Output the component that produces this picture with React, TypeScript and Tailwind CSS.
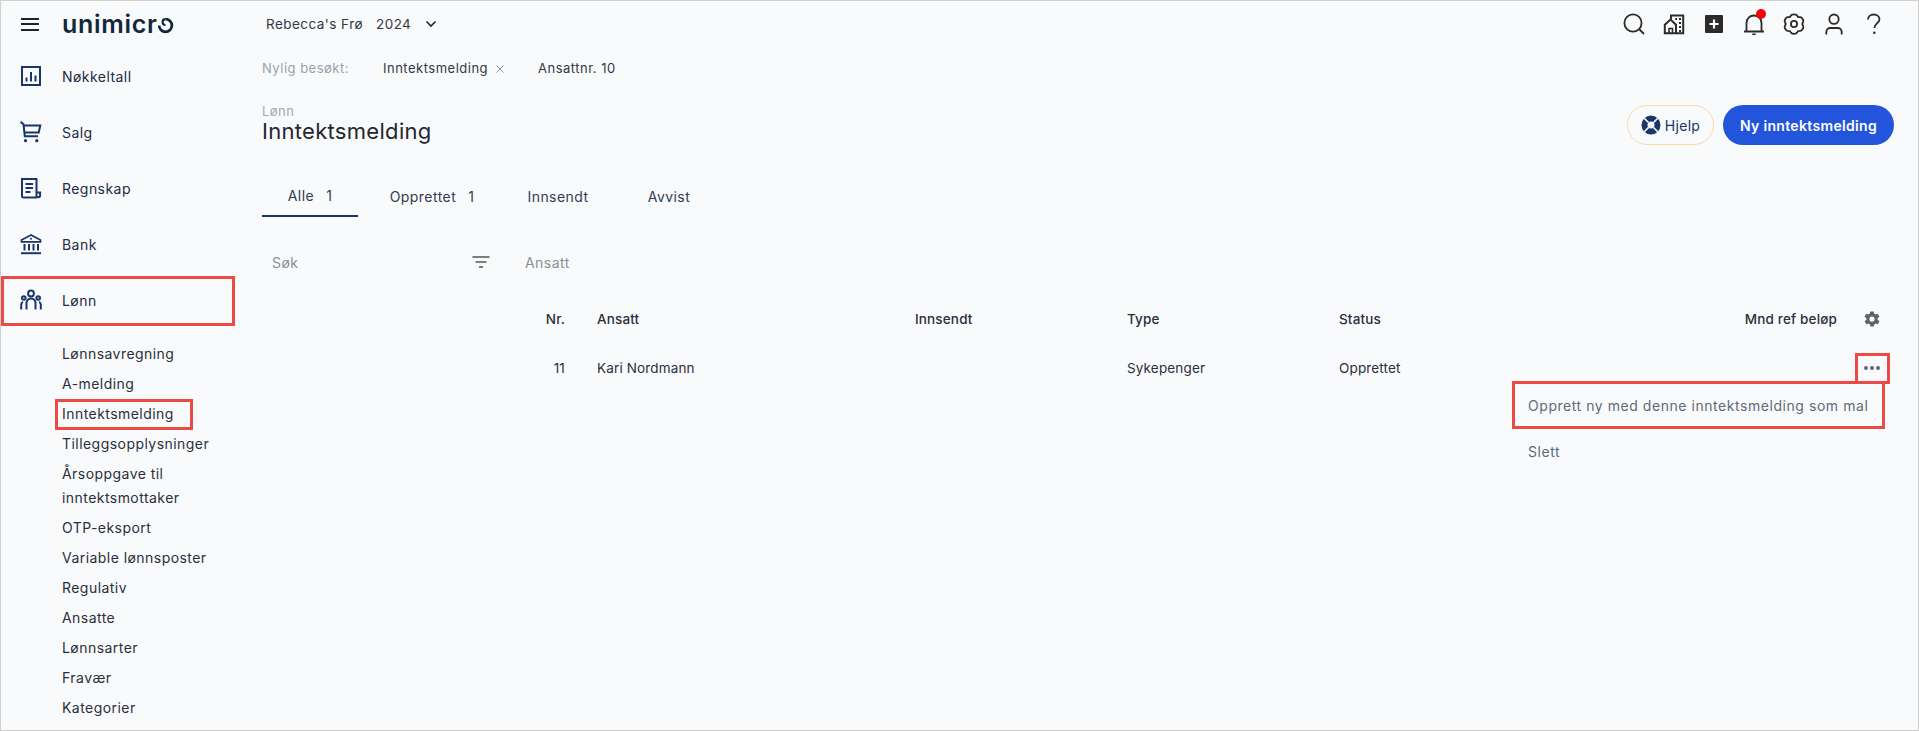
import React from "react";

const navy = "#1a3668";

function Frame({ className }: { className: string }) {
  return <span className={`absolute pointer-events-none border-[3px] border-[#ec4a45] ${className}`} />;
}

function NavIcon({ name }: { name: string }) {
  const p = { width: 22, height: 22, viewBox: "0 0 22 22", fill: "none", stroke: navy, strokeWidth: 2 };
  if (name === "chart")
    return (
      <svg {...p}>
        <rect x="2" y="2" width="18" height="18" />
        <path d="M6.500 16.500v-4M11 16.500V7M15.500 16.500v-6" strokeWidth={2} />
      </svg>
    );
  if (name === "cart")
    return (
      <svg {...p}>
        <path d="M0.500 0.800 L3.500 3.300 L4.800 15.200 H18" />
        <path d="M4 4.500 H20.300 L18.700 11.500 H4.800" />
        <circle cx="5.500" cy="19.700" r="1.600" fill={navy} stroke="none" />
        <circle cx="16.800" cy="19.700" r="1.600" fill={navy} stroke="none" />
      </svg>
    );
  if (name === "doc")
    return (
      <svg {...p}>
        <path d="M17 20.500H3.500A1.500 1.500 0 0 1 2 19V2h14.500v16.500a1.800 1.800 0 0 0 3.600 0V15.500h-3.600" />
        <path d="M5.500 7h7.500M5.500 11h7.500M5.500 15h5" />
      </svg>
    );
  if (name === "bank")
    return (
      <svg {...p} strokeWidth={1.7}>
        <path d="M1.500 7 11 2l9.500 5v1.800h-19z" />
        <path d="M4.500 11v6.500M9 11v6.500M13.500 11v6.500M18 11v6.500" strokeWidth={2} />
        <path d="M1 20.200h20" strokeWidth={2} />
        <circle cx="11" cy="5.800" r="1" fill={navy} stroke="none" />
      </svg>
    );
  return (
    <svg {...p}>
      <circle cx="11" cy="4.500" r="2.900" />
      <circle cx="3.800" cy="9" r="1.800" />
      <circle cx="18.200" cy="9" r="1.800" />
      <path d="M6.500 20.500V14a4.500 4.500 0 0 1 9 0v6.500" />
      <path d="M1.200 20.500v-5a3 3 0 0 1 1.800-2.700M20.800 20.500v-5a3 3 0 0 0-1.800-2.700" />
    </svg>
  );
}

function NavItem({ icon, label, framed }: { icon: string; label: string; framed?: boolean }) {
  return (
    <div className="relative h-[56px] flex items-center pl-[19px] gap-[20px] text-[14px] text-[#1f2a44]">
      <NavIcon name={icon} />
      <span>{label}</span>
      {framed && <Frame className="left-0 top-[4px] w-[234px] h-[50px]" />}
    </div>
  );
}

function TopIcons() {
  const s = { width: 22, height: 22, viewBox: "0 0 22 22", fill: "none", stroke: "#2b2b2b", strokeWidth: 1.8 };
  return (
    <div className="flex items-center gap-[18px]">
      <svg {...s}>
        <circle cx="10" cy="10" r="8.600" />
        <path d="m16 16 5 5" />
      </svg>
      <svg {...s}>
        <path d="M8 6V2.500h12.200V20.200H1.800v-8.500L7.500 6.500l5.500 5.200v8.500" strokeWidth={2} />
        <path d="M6 20v-4.500h3.500V20" strokeWidth={1.600} />
        <path d="M12.200 6h1.800M16 6h2M16 10h2M16 14h2M16 18h2" strokeWidth={2} />
      </svg>
      <svg {...s} stroke="none">
        <rect x="2" y="2" width="18" height="18" rx="1" fill="#2b2b2b" />
        <path d="M11 6.500v9M6.500 11h9" stroke="#fff" strokeWidth={2.200} />
      </svg>
      <span className="relative block w-[22px] h-[22px]">
        <svg {...s}>
          <path d="M1 18.500h20M3.500 18.500V10a7.500 7.500 0 0 1 15 0v8.500" strokeWidth={1.800} />
          <path d="M9.300 21.500h3.400" strokeWidth={2} />
        </svg>
        <span className="absolute -top-[4px] left-[13px] w-[10px] h-[10px] rounded-full bg-[#f50505]" />
      </span>
      <svg {...s}>
        <path
          d="M8.800 2.200c1-.9 3.400-.9 4.400 0l1 1.500 1.900.100c1.300.3 2.500 2.300 2.100 3.700l-.8 1.600.800 1.700c.4 1.300-.8 3.400-2.100 3.700l-1.900.1-1 1.500c-1 .9-3.400.900-4.400 0l-1-1.500-1.900-.1C4.600 14.200 3.400 12.100 3.800 10.800l.8-1.700-.8-1.600C3.400 6.100 4.600 4.100 5.900 3.800l1.900-.1z"
          transform="translate(11 11) scale(1.28) translate(-11 -9.100)"
          strokeWidth={1.400}
        />
        <circle cx="11" cy="11" r="3.100" />
      </svg>
      <svg {...s}>
        <circle cx="11" cy="6.200" r="4.700" />
        <path d="M3.300 21.500v-2.500a4 4 0 0 1 4-4h7.400a4 4 0 0 1 4 4v2.500" />
      </svg>
      <svg {...s}>
        <path d="M5 6.500C5 3.500 7.500 1.500 10.800 1.500c3.200 0 5.700 2 5.700 4.800 0 4-5.200 4.200-5.200 8.700" />
        <circle cx="11.300" cy="19.800" r="1.300" fill="#2b2b2b" stroke="none" />
      </svg>
    </div>
  );
}

const subItems: [string, string?][] = [
  ["Lønnsavregning"],
  ["A-melding"],
  ["Inntektsmelding", "framed"],
  ["Tilleggsopplysninger"],
  ["Årsoppgave til inntektsmottaker"],
  ["OTP-eksport"],
  ["Variable lønnsposter"],
  ["Regulativ"],
  ["Ansatte"],
  ["Lønnsarter"],
  ["Fravær"],
  ["Kategorier"],
];

const cols = "grid grid-cols-[40px_32px_318px_212px_212px_1fr_57px] items-center";

export default function App() {
  return (
    <div
      className="w-[1919px] h-[731px] overflow-hidden flex border border-[#cfcfcf] bg-[#f9fafc] text-[#2b2f3a] tracking-[0.45px]"
      style={{ fontFamily: "Inter, 'Noto Sans', sans-serif" }}
    >
      <aside className="w-[261px] shrink-0 flex flex-col">
        <div className="h-[46px] flex items-center pl-[20px] gap-[23px]">
          <span className="flex flex-col gap-[3.500px] w-[18px]">
            <span className="h-[2px] bg-[#22222c]" />
            <span className="h-[2px] bg-[#22222c]" />
            <span className="h-[2px] bg-[#22222c]" />
          </span>
          <span className="flex items-center text-[#12283a] text-[25px] leading-none font-semibold tracking-[0.7px]">
            unimicr
            <svg width="17" height="17" viewBox="0 0 16 16" fill="none" stroke="#12283a" strokeWidth="2.600" className="mt-[3px] -ml-[1px]">
              <path d="M8 2A6 6 0 1 1 2 8" />
              <path d="M8 2 A2.500 2.500 0 0 0 8 7.500" strokeWidth="2" />
            </svg>
          </span>
        </div>
        <div className="h-[1px]" />
        <NavItem icon="chart" label="Nøkkeltall" />
        <NavItem icon="cart" label="Salg" />
        <NavItem icon="doc" label="Regnskap" />
        <NavItem icon="bank" label="Bank" />
        <NavItem icon="people" label="Lønn" framed />
        <div className="mt-[11px] pl-[61px] pr-[30px] text-[14px] leading-[24px] text-[#2b2f3a]">
          {subItems.map(([t, f]) => (
            <div key={t} className="relative py-[3px] w-[170px]">
              {t}
              {f && <Frame className="-left-[7px] top-[0px] w-[138px] h-[31px]" />}
            </div>
          ))}
        </div>
      </aside>

      <main className="flex-1 flex flex-col pr-[24px]">
        <header className="h-[46px] flex items-center justify-between pr-[9px]">
          <div className="flex items-center pl-[4px] text-[13.500px] text-[#333845]">
            <span>Rebecca's Frø</span>
            <span className="ml-[13px]">2024</span>
            <svg width="14" height="14" viewBox="0 0 14 14" fill="none" stroke="#22222c" strokeWidth="1.600" className="ml-[13px]">
              <path d="m2.500 4.500 4.500 4.500 4.500-4.500" />
            </svg>
          </div>
          <TopIcons />
        </header>

        <div className="flex items-center h-[44px] text-[13px] tracking-[0.5px]">
          <span className="text-[#99a1ad]">Nylig besøkt:</span>
          <span className="ml-[34px] text-[#333845]">Inntektsmelding</span>
          <svg width="10" height="10" viewBox="0 0 10 10" stroke="#8b8f98" strokeWidth="1" className="ml-[7px]">
            <path d="m1.500 1.500 7 7m0-7-7 7" />
          </svg>
          <span className="ml-[33px] text-[#333845]">Ansattnr. 10</span>
        </div>

        <div className="flex items-start justify-between mt-[13px]">
          <div>
            <div className="text-[13px] leading-[14px] text-[#a3a9b2]">Lønn</div>
            <h1 className="text-[22px] leading-[26px] text-[#22262f] font-normal tracking-[0.3px]">Inntektsmelding</h1>
          </div>
          <div className="flex items-center gap-[9px] mt-[1px]">
            <button className="h-[40px] w-[87px] rounded-full border border-[#fbdca6] flex items-center justify-center gap-[4px] text-[14px] text-[#1a3668] tracking-[0.3px]">
              <svg width="20" height="20" viewBox="0 0 20 20" fill="none">
                <circle cx="10" cy="10" r="6.500" stroke={navy} strokeWidth="6" />
                <path d="M7.500 7.500 3 3M12.500 7.500 17 3M7.500 12.500 3 17M12.500 12.500 17 17" stroke="#f9fafc" strokeWidth="1.600" />
              </svg>
              Hjelp
            </button>
            <button className="h-[40px] w-[171px] rounded-full bg-[#2355dc] text-white text-[14px] font-semibold tracking-[0.33px]">Ny inntektsmelding</button>
          </div>
        </div>

        <nav className="flex mt-[30px] h-[42px] text-[14px] text-[#333a52]">
          <div className="w-[96px] border-b-2 border-[#1a3668] h-[42px] flex items-center justify-center gap-[12px]">
            <span>Alle</span><span>1</span>
          </div>
          <div className="w-[146px] pl-[2px] h-[42px] flex items-center justify-center gap-[12px]">
            <span>Opprettet</span><span>1</span>
          </div>
          <div className="w-[96px] ml-[6px] h-[42px] flex items-center justify-center">Innsendt</div>
          <div className="w-[106px] ml-[10px] h-[42px] flex items-center justify-center">Avvist</div>
        </nav>

        <div className="flex items-center h-[40px] mt-[25px] text-[14px] text-[#8a8f98]">
          <span className="ml-[10px] w-[200px]">Søk</span>
          <svg width="18" height="12" viewBox="0 0 18 12" stroke="#555" strokeWidth="1.600">
            <path d="M0.500 1h17M3.500 6h11M7 11h4" />
          </svg>
          <span className="ml-[35px]">Ansatt</span>
        </div>

        <div className="ml-[263px] mt-[17px] text-[13.500px] tracking-[0.15px]">
          <div className={`${cols} h-[40px] font-medium text-[#2b2f3a]`}>
            <span className="text-right">Nr.</span>
            <span />
            <span>Ansatt</span>
            <span>Innsendt</span>
            <span>Type</span>
            <span className="flex justify-between">
              <span>Status</span>
              <span>Mnd ref beløp</span>
            </span>
            <span className="pl-[26px]">
              <svg width="18" height="18" viewBox="0 0 24 24" fill="#5f6368" className="block">
                <path d="M19.400 13a7.800 7.800 0 0 0 0-2l2.100-1.600a.5.500 0 0 0 .1-.6l-2-3.500a.5.500 0 0 0-.6-.2l-2.500 1a7.500 7.500 0 0 0-1.700-1l-.4-2.600a.5.500 0 0 0-.5-.4h-4a.5.500 0 0 0-.5.400l-.4 2.600a7.500 7.500 0 0 0-1.700 1l-2.500-1a.5.500 0 0 0-.6.200l-2 3.500a.5.500 0 0 0 .1.600L4.600 11a7.800 7.800 0 0 0 0 2l-2.100 1.600a.5.500 0 0 0-.1.600l2 3.500a.5.500 0 0 0 .6.200l2.500-1a7.500 7.500 0 0 0 1.700 1l.4 2.600a.5.500 0 0 0 .5.400h4a.5.500 0 0 0 .5-.4l.4-2.600a7.500 7.500 0 0 0 1.700-1l2.500 1a.5.500 0 0 0 .6-.2l2-3.500a.5.500 0 0 0-.1-.6zM12 15.500a3.500 3.500 0 1 1 0-7 3.500 3.500 0 0 1 0 7z" />
              </svg>
            </span>
          </div>
          <div className={`${cols} h-[58px]`}>
            <span className="text-right">11</span>
            <span />
            <span>Kari Nordmann</span>
            <span />
            <span>Sykepenger</span>
            <span>Opprettet</span>
            <span className="relative h-[30px] flex items-center justify-end pr-[14px]">
              <span className="flex gap-[2px]">
                <i className="block w-[4px] h-[4px] rounded-full bg-[#5f6673]" />
                <i className="block w-[4px] h-[4px] rounded-full bg-[#5f6673]" />
                <i className="block w-[4px] h-[4px] rounded-full bg-[#5f6673]" />
              </span>
              <Frame className="right-[4px] top-[0px] w-[35px] h-[31px]" />
            </span>
          </div>
          <div className="flex justify-end pr-[9px] -mt-[16px]">
            <div className="w-[373px] text-[14px] text-[#626a78] tracking-[0.55px]">
              <div className="relative h-[48px] flex items-center pl-[16px] whitespace-nowrap">
                Opprett ny med denne inntektsmelding som mal
                <Frame className="left-0 top-0 w-full h-[48px]" />
              </div>
              <div className="h-[44px] pl-[16px] flex items-center">Slett</div>
            </div>
          </div>
        </div>
      </main>
    </div>
  );
}
